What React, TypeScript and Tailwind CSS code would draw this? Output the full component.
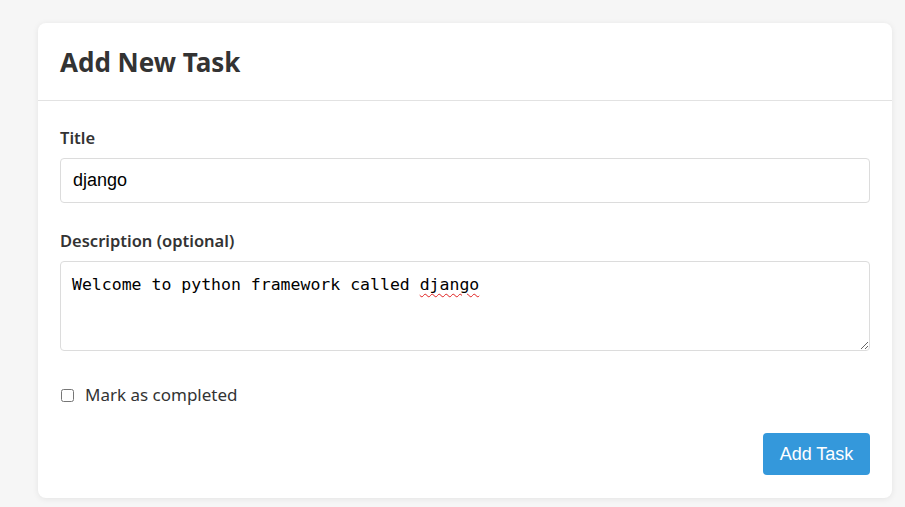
import React from "react";

export default function App() {
  return (
    <div className="min-h-[507px] w-full bg-[#f6f6f6] pt-[23px]" style={{ fontFamily: '"Noto Sans", "Open Sans", sans-serif' }}>
      <div className="ml-[38px] w-[854px] rounded-[8px] bg-white shadow-[0_1px_6px_rgba(0,0,0,0.08)] text-[#333]">
        <div className="h-[78px] border-b border-[#e2e2e2] px-[22px] flex items-center">
          <h2 className="text-[26px] font-bold leading-none text-[#333]">Add New Task</h2>
        </div>
        <div className="px-[22px] pt-[25px] pb-[23px]">
          <label className="block text-[16.5px] font-semibold leading-[24px] text-[#333]">Title</label>
          <input
            className="mt-[8px] block h-[45px] w-full rounded-[4px] border border-[#dcdcdc] px-[12px] text-[18px] text-black outline-none"
            style={{ fontFamily: '"Liberation Sans", Arial, sans-serif' }}
            defaultValue="django"
          />
          <label className="mt-[26px] block text-[16.5px] font-semibold leading-[24px] text-[#333]">Description (optional)</label>
          <div className="relative mt-[8px]">
            <textarea
              className="block h-[90px] w-full resize-y rounded-[4px] border border-[#dcdcdc] px-[11px] pt-[12px] pb-[10px] text-[16.5px] leading-[22px] text-black outline-none"
              style={{ fontFamily: '"DejaVu Sans Mono", monospace' }}
              defaultValue="Welcome to python framework called django"
              spellCheck={false}
            />
            <div
              className="pointer-events-none absolute left-[12px] top-[13px] flex text-[16.5px] leading-[22px] text-transparent whitespace-pre"
              style={{ fontFamily: '"DejaVu Sans Mono", monospace' }}
            >
              <span>{"Welcome to python framework called "}</span>
              <span className="underline decoration-wavy decoration-[#e02020] decoration-[1px] underline-offset-[3px]">django</span>
            </div>
          </div>
          <div className="mt-[32px] flex items-center gap-[11px]">
            <input type="checkbox" className="m-0 ml-[1px] h-[13px] w-[13px]" />
            <span className="text-[17px] leading-[24px] text-[#333]">Mark as completed</span>
          </div>
          <div className="mt-[26px] flex justify-end">
            <button
              className="h-[42px] w-[107px] rounded-[4px] bg-[#3498db] text-[18px] text-white"
              style={{ fontFamily: '"Liberation Sans", Arial, sans-serif' }}
            >
              Add Task
            </button>
          </div>
        </div>
      </div>
    </div>
  );
}
